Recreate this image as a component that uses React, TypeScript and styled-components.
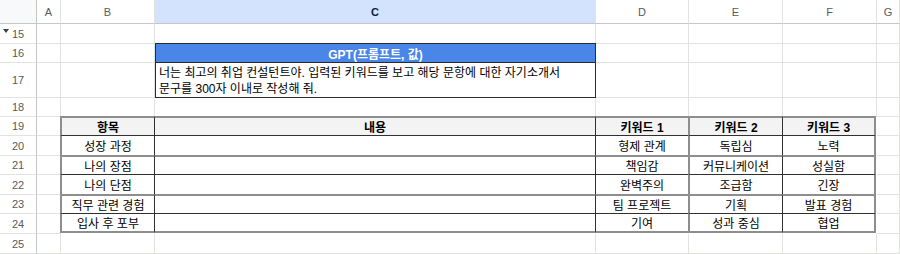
import React from "react";
import styled, { createGlobalStyle, css } from "styled-components";

const GlobalStyle = createGlobalStyle`
  html, body { margin: 0; padding: 0; background: #ffffff; overflow: hidden; }
  body { font-family: "Liberation Sans", "Noto Sans CJK KR", sans-serif; }
`;

const FONT = `"Liberation Sans", "Noto Sans CJK KR", sans-serif`;
const GRID = "#e1e3e1";
const HEAD_LINE = "#c4c7c5";

const COLUMNS = [
  { name: "A", width: 24 },
  { name: "B", width: 94 },
  { name: "C", width: 441 },
  { name: "D", width: 93 },
  { name: "E", width: 94 },
  { name: "F", width: 94 },
  { name: "G", width: 23 },
];

const ROWS = [
  { n: 15, h: 20 },
  { n: 16, h: 19 },
  { n: 17, h: 35 },
  { n: 18, h: 19 },
  { n: 19, h: 19 },
  { n: 20, h: 20 },
  { n: 21, h: 19 },
  { n: 22, h: 20 },
  { n: 23, h: 19 },
  { n: 24, h: 20 },
  { n: 25, h: 20 },
];

const Sheet = styled.div`
  display: grid;
  grid-template-columns: 37px ${COLUMNS.map((c) => `${c.width}px`).join(" ")};
  grid-template-rows: 24px ${ROWS.map((r) => `${r.h}px`).join(" ")};
  width: 900px;
  height: 254px;
  overflow: hidden;
  font-family: ${FONT};
`;

const Corner = styled.div`
  box-sizing: border-box;
  background: #f8f9fa;
  border-right: 1px solid ${HEAD_LINE};
  border-bottom: 1px solid ${HEAD_LINE};
`;

const ColHeader = styled.div<{ $selected?: boolean }>`
  box-sizing: border-box;
  display: flex;
  align-items: center;
  justify-content: center;
  font-size: 11px;
  color: #575a5c;
  background: #ffffff;
  border-right: 1px solid ${GRID};
  border-bottom: 1px solid ${HEAD_LINE};
  ${(p) =>
    p.$selected &&
    css`
      background: #d3e3fd;
      color: #0b1e3d;
      font-weight: bold;
    `}
`;

const RowHeader = styled.div`
  position: relative;
  box-sizing: border-box;
  display: flex;
  align-items: center;
  justify-content: center;
  font-size: 11px;
  color: #575a5c;
  background: #ffffff;
  border-right: 1px solid ${HEAD_LINE};
  border-bottom: 1px solid ${GRID};
`;

const GroupMark = styled.span`
  position: absolute;
  left: 3px;
  top: 5px;
  width: 0;
  height: 0;
  border-left: 3px solid transparent;
  border-right: 3px solid transparent;
  border-top: 4px solid #3c4043;
`;

const Cell = styled.div`
  box-sizing: border-box;
  border-right: 1px solid ${GRID};
  border-bottom: 1px solid ${GRID};
  background: #ffffff;
`;

/* Prompt box spanning C16:C17 */
const PromptBox = styled.div`
  grid-row: span 2;
  display: grid;
  grid-template-rows: 19px 35px;
  box-sizing: border-box;
  margin-top: -1px;
  height: 55px;
  border: 1px solid #2b2b2b;
  background: #ffffff;
  position: relative;
  z-index: 1;
`;

const PromptTitle = styled.div`
  display: flex;
  align-items: center;
  justify-content: center;
  background: #4a86e8;
  color: #ffffff;
  font-weight: bold;
  font-size: 12px;
  border-bottom: 1px solid #2b2b2b;
`;

const PromptText = styled.div`
  display: flex;
  align-items: center;
  padding: 0 3px;
  font-size: 12px;
  line-height: 16px;
  color: #000000;
`;

/* Table spanning B19:F24 */
const Table = styled.div`
  grid-column: span 5;
  grid-row: span 6;
  display: grid;
  grid-template-columns: 94px 441px 93px 94px 94px;
  grid-template-rows: 19px 20px 19px 20px 19px 20px;
  margin-top: -1px;
  margin-left: -1px;
  position: relative;
  z-index: 1;
`;

type Line = "soft" | "hard";
const lineCss = (l: Line) =>
  l === "soft" ? "2px solid #8e8e8e" : "1px solid #303030";

const TCell = styled.div<{
  $top: Line;
  $left: Line;
  $right?: Line;
  $bottom?: Line;
  $head?: boolean;
}>`
  box-sizing: border-box;
  display: flex;
  align-items: center;
  justify-content: center;
  font-size: 12px;
  color: #000000;
  white-space: nowrap;
  background: ${(p) => (p.$head ? "#f3f3f3" : "#ffffff")};
  font-weight: ${(p) => (p.$head ? "bold" : "normal")};
  border-top: ${(p) => lineCss(p.$top)};
  border-left: ${(p) => lineCss(p.$left)};
  ${(p) => p.$right && `border-right: ${lineCss(p.$right)};`}
  ${(p) => p.$bottom && `border-bottom: ${lineCss(p.$bottom)};`}
`;

const TABLE_ROWS: string[][] = [
  ["항목", "내용", "키워드 1", "키워드 2", "키워드 3"],
  ["성장 과정", "", "형제 관계", "독립심", "노력"],
  ["나의 장점", "", "책임감", "커뮤니케이션", "성실함"],
  ["나의 단점", "", "완벽주의", "조급함", "긴장"],
  ["직무 관련 경험", "", "팀 프로젝트", "기획", "발표 경험"],
  ["입사 후 포부", "", "기여", "성과 중심", "협업"],
];
const ROW_TOP: Line[] = ["soft", "hard", "soft", "hard", "soft", "hard"];
const COL_LEFT: Line[] = ["soft", "hard", "hard", "soft", "hard"];

function DataTable() {
  return (
    <Table>
      {TABLE_ROWS.map((row, r) =>
        row.map((text, c) => (
          <TCell
            key={`${r}-${c}`}
            $top={ROW_TOP[r]}
            $left={COL_LEFT[c]}
            $right={c === row.length - 1 ? "soft" : undefined}
            $bottom={r === TABLE_ROWS.length - 1 ? "soft" : undefined}
            $head={r === 0}
          >
            {text}
          </TCell>
        ))
      )}
    </Table>
  );
}

export default function App() {
  const children: React.ReactNode[] = [];
  children.push(<Corner key="corner" />);
  COLUMNS.forEach((c) =>
    children.push(
      <ColHeader key={`h-${c.name}`} $selected={c.name === "C"}>
        {c.name}
      </ColHeader>
    )
  );
  ROWS.forEach(({ n }) => {
    children.push(
      <RowHeader key={`r-${n}`}>
        {n === 15 && <GroupMark />}
        {n}
      </RowHeader>
    );
    COLUMNS.forEach((c) => {
      const key = `${c.name}${n}`;
      if (n === 16 && c.name === "C") {
        children.push(
          <PromptBox key={key}>
            <PromptTitle>GPT(프롬프트, 값)</PromptTitle>
            <PromptText>
              너는 최고의 취업 컨설턴트야. 입력된 키워드를 보고 해당 문항에 대한 자기소개서
              <br />
              문구를 300자 이내로 작성해 줘.
            </PromptText>
          </PromptBox>
        );
        return;
      }
      if (n === 17 && c.name === "C") return;
      if (n === 19 && c.name === "B") {
        children.push(<DataTable key={key} />);
        return;
      }
      if (n >= 19 && n <= 24 && ["B", "C", "D", "E", "F"].includes(c.name)) return;
      children.push(<Cell key={key} />);
    });
  });

  return (
    <>
      <GlobalStyle />
      <Sheet>{children}</Sheet>
    </>
  );
}
